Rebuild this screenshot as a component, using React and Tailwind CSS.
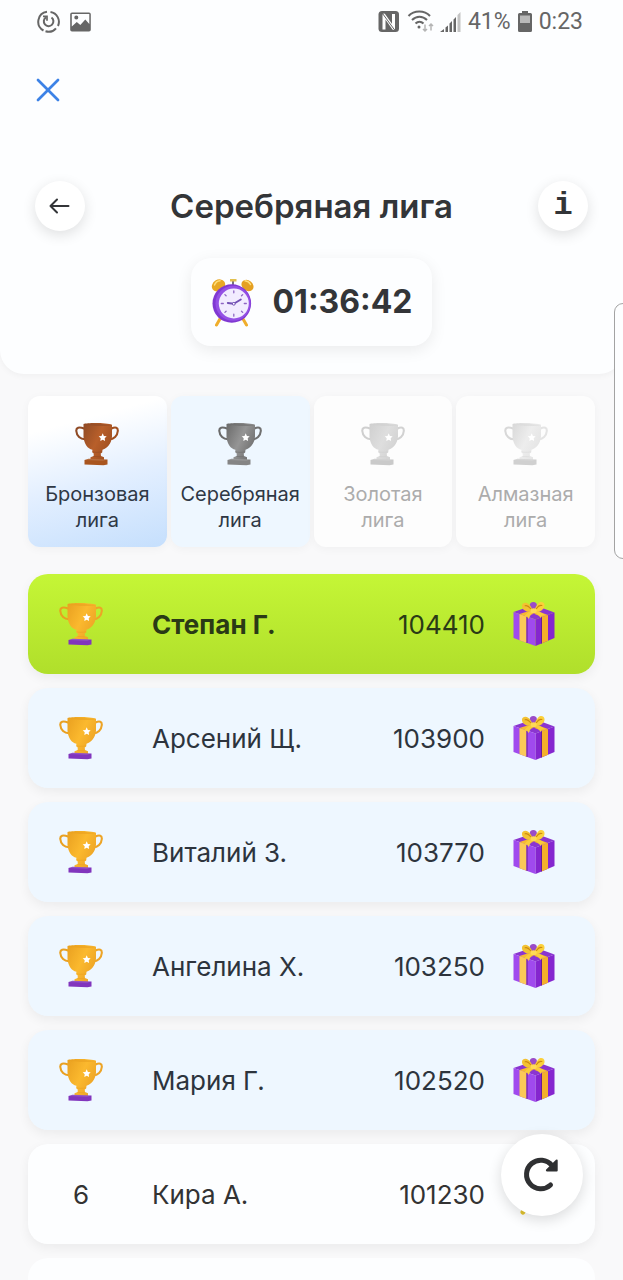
import { X } from 'lucide-react';

const leagues = [
  { id: 'bronze', name: 'Бронзовая', card: 'bg-linear-165 from-white from-20% via-[#e3efff] via-55% to-[#c5dffd]', text: 'text-[#2f3845]', cup: ['#8f4a25', '#b85f2a', '#a04f20'], base: '#a9551f' },
  { id: 'silver', name: 'Серебряная', card: 'bg-[#eef7ff]', text: 'text-[#2f3845]', cup: ['#6a6a6a', '#959595', '#707070'], base: '#858585' },
  { id: 'gold', name: 'Золотая', card: 'bg-[#fdfdfd]', text: 'text-[#acacac]', cup: ['#cfcfcf', '#dedede', '#d2d2d2'], base: '#cacaca' },
  { id: 'diamond', name: 'Алмазная', card: 'bg-[#fdfdfd]', text: 'text-[#acacac]', cup: ['#d8d8d8', '#ededed', '#e4e4e4'], base: '#d0d0d0' },
];

const players = [
  { place: 1, name: 'Степан Г.', score: 104410 },
  { place: 2, name: 'Арсений Щ.', score: 103900 },
  { place: 3, name: 'Виталий З.', score: 103770 },
  { place: 4, name: 'Ангелина Х.', score: 103250 },
  { place: 5, name: 'Мария Г.', score: 102520 },
  { place: 6, name: 'Кира А.', score: 101230 },
];

function Cup({ id, colors, base }) {
  const fill = `url(#cup-${id})`;
  return (
    <svg viewBox="0 0 44 44" className="size-11" aria-hidden="true">
      <defs>
        <linearGradient id={`cup-${id}`} x1="0" y1="0" x2="1" y2="0.6">
          <stop offset="0" stopColor={colors[0]} />
          <stop offset="0.55" stopColor={colors[1]} />
          <stop offset="1" stopColor={colors[2]} />
        </linearGradient>
      </defs>
      <path d="M9 6.500C4 4.500 1 5.500 1.300 9c.4 5 4 8.500 9 8.300" fill="none" stroke={colors[0]} strokeWidth="2.100" strokeLinecap="round" />
      <path d="M36.500 6.500c4-2 6.600-1 6.300 2.500-.4 5-4 8.300-8.500 8.300" fill="none" stroke={colors[2]} strokeWidth="2.100" strokeLinecap="round" />
      <path d="M8.500 2c4-1.500 24-1.300 28.500.7V14.500c-.7 7.500-4.500 11.500-9.500 13.300l-.3 2.700-1.500 1 .3 2.500 3 1.200v3.300H15.500v-3.300l3.200-1.200v-2.500l-1.500-1.200.2-2.500C12.500 26.500 9.500 22.500 8.500 15z" fill={fill} />
      <path d="M9 2.500c6-1.400 21-1 27.600.8-6 1.200-21.500.8-27.600-.8z" fill={colors[0]} opacity="0.6" />
      <path d="M17.600 29.800c2.500.7 6 .7 9.200 0M18.500 34.500l7 .3" fill="none" stroke={colors[0]} strokeWidth="0.800" opacity="0.7" />
      <path d="M9.500 38l4-1.200 19 .6v5l-4 .9-19-.9z" fill={base} />
      <path d="M9.500 38l4-1.200 19 .6-4.500 1.300z" fill="#fff" opacity="0.15" />
      <path d="M27.700 11.300l1.200 2.600 2.800.4-2 2 .4 2.800-2.400-1.300-2.400 1.300.4-2.800-2-2 2.800-.4z" fill="#fff" />
    </svg>
  );
}

function Gift() {
  return (
    <svg viewBox="0 0 42 46" className="h-[46px] w-[42px]" aria-hidden="true">
      <path d="M.5 11L21 4l20.500 7.500L22.500 18.500z" fill="#8b35d0" />
      <path d="M.5 11l22 7.500V45L.5 37z" fill="#a04aee" />
      <path d="M41.500 11.500l-19 7V45l19-8z" fill="#8526cf" />
      <path d="M6.500 13l7 2.400v26.300l-7-2.500z" fill="#fbc958" />
      <path d="M29 16.100l6-2.200v25.900L29 42.300z" fill="#f4b02a" />
      <path d="M14 15.500v26.400M28.500 16.300v26.200" stroke="#6b1d94" strokeWidth="1" />
      <path d="M6.500 13L24 7.500l5 2L13.500 15.400zM35 13.900L17 7.500l-5 1.500 17 7.100z" fill="#f7bb30" />
      <circle cx="20.300" cy="4.500" r="3.600" fill="#9a4cc8" />
      <path d="M20 10.500C14.500 12 8.500 9 9 4.500c.3-3 4-3.500 6.500-1.500 2 1.600 3.500 4 4.500 7.500z" fill="#f3c232" />
      <path d="M21 10.500c5.500 1 11-2 10.500-6.500-.3-3.300-4-4-6.300-1.600C23.300 4.600 22 7 21 10.500z" fill="#fbd03a" />
      <path d="M17.500 7.500c-1.800-2.300-3.800-3.300-5.300-2.800M23.500 7.500c1.500-2.300 3.500-3.500 5.300-3" fill="none" stroke="#cc8a10" strokeWidth="1.200" strokeLinecap="round" />
      <path d="M19 9.500c-3.500 1-6 3.500-8 6l3.200.2 1.300 2.300c1.500-3.200 3.500-6 5.500-7.500zM22 9.500c3.500.5 6.500 2 9.500 4.300l-3.300.9-.5 2.300c-2-2.800-4.200-5-7-6.500z" fill="#f9cc3c" />
      <ellipse cx="20.700" cy="9.700" rx="3" ry="2.500" fill="#ffda55" />
    </svg>
  );
}

function GoldKey() {
  return (
    <svg viewBox="0 0 42 46" className="h-[46px] w-[42px]" fill="none" stroke="#e3c52f" aria-hidden="true">
      <circle cx="28" cy="13" r="8" strokeWidth="5" />
      <path d="M23 20L10 41M14 34l6 4" strokeWidth="5" strokeLinecap="round" />
    </svg>
  );
}

function AlarmClock() {
  return (
    <svg viewBox="0 0 44 50" className="h-[50px] w-11" aria-hidden="true">
      <path d="M9.500 41l-4 7M31.500 41l4 7" stroke="#f0ae2c" strokeWidth="3" strokeLinecap="round" />
      <path d="M22 3.500V9" stroke="#77727f" strokeWidth="2" />
      <path d="M19 2h6.500v2.500H19z" fill="#e2c14f" />
      <ellipse cx="7.500" cy="8.500" rx="7" ry="5.800" transform="rotate(-32 7.500 8.500)" fill="#e8a824" />
      <ellipse cx="36.500" cy="8.500" rx="6.500" ry="5.200" transform="rotate(38 36.500 8.500)" fill="#e5a022" />
      <path d="M3.500 8c1-2.500 3-4 5.500-4.200M34 3.800c2.500.4 4.500 1.800 5.500 3.700" fill="none" stroke="#ffdf7a" strokeWidth="1.500" strokeLinecap="round" />
      <circle cx="20.800" cy="26.500" r="19.300" fill="#8038d2" />
      <circle cx="22" cy="26.300" r="17.500" fill="#9450e5" />
      <circle cx="22.800" cy="26.500" r="15" fill="#f2ecff" />
      <path
        d="M22.800 13.800v2M22.800 37.200v2M10.300 26.500h2M33.300 26.500h2M13.900 17.600l1.200 1.200M31.700 17.600l-1.200 1.200M13.900 35.400l1.200-1.200M31.700 35.400l-1.200-1.200"
        stroke="#8e66c4"
        strokeWidth="1.300"
        strokeLinecap="round"
      />
      <path d="M16.800 26l6 .8 7-4.300" fill="none" stroke="#7250b5" strokeWidth="1.900" strokeLinecap="round" strokeLinejoin="round" />
      <circle cx="22.800" cy="26.800" r="1.400" fill="#fff" stroke="#7250b5" strokeWidth="1" />
    </svg>
  );
}

function StatusBar() {
  return (
    <div className="flex h-11 items-center justify-between pr-10 pl-9 font-[Roboto,sans-serif] text-[#666]">
      <div className="flex items-center gap-2">
        <svg viewBox="0 0 24 24" className="size-6" fill="none" stroke="currentColor" strokeWidth="2">
          <path d="M11 1.800a10 10 0 0 0-3.500 18.700M9.500 21.300a10 10 0 0 0 10.500-3M22 16A10 10 0 0 0 14.500 2" />
          <path d="M10 7.300a4.800 4.800 0 1 0 5.500.2" />
          <path d="M7 6.300h4v4.500" strokeWidth="1.700" />
        </svg>
        <svg viewBox="0 0 24 24" className="size-6" fill="currentColor">
          <path fillRule="evenodd" d="M4 2.500h17a1.800 1.800 0 0 1 1.800 1.800v15.400a1.800 1.800 0 0 1-1.800 1.800H4a1.800 1.800 0 0 1-1.800-1.800V4.300A1.800 1.800 0 0 1 4 2.500zM3.800 4v12.500l5-4.500 3.500 3 5-5.500 4 4.500V4zM8.300 5.500a2 2 0 1 1 0 4 2 2 0 0 1 0-4z" />
        </svg>
      </div>
      <div className="flex items-center gap-[6px]">
        <svg viewBox="0 0 24 24" className="size-6" aria-hidden="true">
          <rect x="2.500" y="1" width="20.500" height="21" rx="3.500" fill="currentColor" />
          <path d="M8 19.500V5l9.500 13.500V4" fill="none" stroke="#fff" strokeWidth="3" strokeLinejoin="round" />
          <path d="M6.500 3.500L19 20.500" stroke="currentColor" strokeWidth="1" />
        </svg>
        <svg viewBox="0 0 28 24" className="h-6 w-7" fill="none" stroke="currentColor" strokeWidth="2">
          <path d="M2.500 6C8 0 18.500 0 24 6M6 10c4.500-4.500 10.500-4.500 15 0M9.500 13.500c2.500-2.500 5.500-2.500 8 0" />
          <circle cx="13" cy="17" r="1.500" fill="currentColor" stroke="none" />
          <path d="M19 14.500V21m-2-2l2 2 2-2M25 20.500V14m-2 2l2-2 2 2" stroke="#b5b5b5" strokeWidth="1.500" />
        </svg>
        <svg viewBox="0 0 22 24" className="h-6 w-[22px]" fill="currentColor">
          <path d="M0 22l4-3v3zM5.500 17.500l2.500-2v6.500H5.500zM9.500 13.500l2.500-2.500V22H9.500zM13.500 9.500L16 7v15h-2.500z" />
          <path d="M17.500 5L20.500 2v20h-3z" fill="#c4c4c4" />
        </svg>
        <span className="text-[23px]">41%</span>
        <svg viewBox="0 0 16 24" className="h-6 w-4">
          <path d="M5 1h6v2h2.500A1.500 1.500 0 0 1 15 4.500v16a1.500 1.500 0 0 1-1.500 1.500h-11A1.500 1.500 0 0 1 1 20.500v-16A1.500 1.500 0 0 1 2.500 3H5z" fill="currentColor" />
          <path d="M3 5.500h10V13H3z" fill="#b9b9b9" />
        </svg>
        <span className="text-[23px]">0:23</span>
      </div>
    </div>
  );
}

function LeagueTabs() {
  return (
    <nav className="mt-[22px] grid grid-cols-4 gap-1">
      {leagues.map((league) => (
        <button
          key={league.id}
          className={`flex flex-col items-center gap-[15px] rounded-xl pt-[26px] pb-[14px] text-[20px] leading-[26px] shadow-[0_2px_10px_rgba(0,0,0,0.04)] ${league.card} ${league.text}`}
        >
          <Cup id={league.id} colors={league.cup} base={league.base} />
          <span>
            {league.name}
            <br />
            лига
          </span>
        </button>
      ))}
    </nav>
  );
}

function rowStyle(place) {
  if (place === 1) return 'bg-linear-to-b from-[#c5f636] to-[#b0df2b] text-[#2a3a16]';
  if (place < 6) return 'bg-[#eef7ff] text-[#2d343d]';
  return 'bg-[#fdfeff] text-[#333]';
}

function PlayerRow({ place, name, score }) {
  return (
    <li className={`flex h-[100px] shrink-0 items-center rounded-[20px] pr-10 pl-[31px] text-[26px] shadow-[0_4px_12px_rgba(0,0,0,0.06)] ${rowStyle(place)}`}>
      <span className="flex w-11 justify-center">
        {place < 6 ? <Cup id={`place-${place}`} colors={['#e9a020', '#fbb92e', '#eda426']} base="#8135bd" /> : place}
      </span>
      <span className={`ml-[49px] flex-1 ${place === 1 ? 'font-bold' : ''}`}>{name}</span>
      <span className="mr-7">{score}</span>
      {place < 6 ? <Gift /> : <GoldKey />}
    </li>
  );
}

export default function App() {
  return (
    <div className="relative flex h-screen flex-col overflow-hidden bg-[#f9f9fa] font-[Inter,sans-serif] text-[#333538]">
      <header className="rounded-b-3xl bg-[#fdfeff] pb-7 shadow-[0_2px_6px_rgba(0,0,0,0.04)]">
        <StatusBar />
        <div className="flex h-[92px] items-center px-7">
          <button aria-label="Закрыть" className="text-[#3c82e6]">
            <X size={40} strokeWidth={1.6} />
          </button>
        </div>
        <div className="mt-[45px] flex items-center justify-between px-[35px]">
          <button aria-label="Назад" className="flex size-[50px] items-center justify-center rounded-full bg-white shadow-[0_4px_14px_rgba(0,0,0,0.12)]">
            <svg viewBox="0 0 28 28" className="size-7" fill="none" stroke="currentColor" strokeWidth="2" strokeLinecap="round" strokeLinejoin="round">
              <path d="M22.500 14H4.500M11 7.500L4.500 14l6.500 6.500" />
            </svg>
          </button>
          <h1 className="text-[33px] leading-[50px] font-semibold">Серебряная лига</h1>
          <button aria-label="О лиге" className="flex size-[50px] items-center justify-center rounded-full bg-white font-['Liberation_Mono',monospace] text-[32px] font-bold shadow-[0_4px_14px_rgba(0,0,0,0.12)]">
            i
          </button>
        </div>
        <div className="mx-auto mt-[27px] flex h-[88px] w-fit items-center gap-[18px] rounded-[20px] bg-[#fdfeff] px-5 shadow-[0_4px_16px_rgba(0,0,0,0.08)]">
          <AlarmClock />
          <time className="text-[32px] font-bold">01:36:42</time>
        </div>
      </header>

      <main className="px-7">
        <LeagueTabs />
        <ol className="mt-[27px] flex flex-col gap-[14px]">
          {players.map((player) => (
            <PlayerRow key={player.place} {...player} />
          ))}
          <li className="h-[100px] rounded-[20px] bg-[#fdfeff]" />
        </ol>
      </main>

      {/* edge panel handle */}
      <div className="absolute top-[303px] -right-px h-64 w-[10px] rounded-l-[9px] border border-[#a3a3a3] bg-[#fdfeff]" />

      <button aria-label="Обновить" className="absolute right-10 bottom-16 flex size-[82px] items-center justify-center rounded-full bg-white shadow-[0_4px_14px_rgba(0,0,0,0.14)]">
        <svg viewBox="0 0 40 40" className="size-10">
          <path d="M28.500 30A14.300 14.300 0 1 1 30 10.500" fill="none" stroke="#2f3032" strokeWidth="5" strokeLinecap="round" />
          <path d="M35.700 5.500v10a1 1 0 0 1-1 1H25a1.200 1.200 0 0 1-.8-2L34 4.700a1 1 0 0 1 1.700.8z" fill="#2f3032" />
        </svg>
      </button>
    </div>
  );
}
